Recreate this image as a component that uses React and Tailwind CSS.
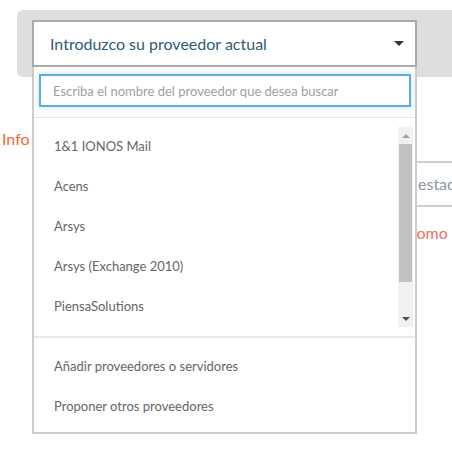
import { useState } from "react"

const providers = [
  "1&1 IONOS Mail",
  "Acens",
  "Arsys",
  "Arsys (Exchange 2010)",
  "PiensaSolutions",
  "Strato",
]

function ProviderDropdown() {
  const [query, setQuery] = useState("")

  return (
    <div className="absolute left-[32px] top-[67px] w-[385px] h-[367px] bg-white border-2 border-t-0 border-[#cccccc] flex flex-col">
      {/* Search */}
      <div className="pl-[5px] pr-[4px] pt-[7px] pb-[10px] border-b border-[#e5e5e5]">
        <input
          value={query}
          onChange={(e) => setQuery(e.target.value)}
          placeholder="Escriba el nombre del proveedor que desea buscar"
          className="w-full h-[33px] border-2 border-[#5dade2] px-[12px] text-[13px] text-[#555] placeholder:text-[#a0a0a0] outline-none shadow-[0_0_6px_rgba(93,173,226,0.35)]"
        />
      </div>

      {/* List */}
      <div className="pt-[9px] pb-[9px] border-b-2 border-[#e8e8e8]">
        <div className="h-[200px] flex overflow-hidden">
          <ul className="flex-1">
            {providers.map((p) => (
              <li key={p} className="h-[40px] flex items-center pl-[20px] text-[13px] text-[#666]">
                {p}
              </li>
            ))}
          </ul>
          <div className="w-[15px] mr-[2px] bg-[#f1f1f1] flex flex-col items-center">
            <div className="h-[17px] flex items-center justify-center">
              <div className="w-0 h-0 border-l-[4px] border-r-[4px] border-b-[4px] border-l-transparent border-r-transparent border-b-[#a3a3a3]" />
            </div>
            <div className="w-[13px] h-[138px] bg-[#c1c1c1]" />
            <div className="flex-1" />
            <div className="h-[17px] flex items-center justify-center">
              <div className="w-0 h-0 border-l-[4px] border-r-[4px] border-t-[4px] border-l-transparent border-r-transparent border-t-[#505050]" />
            </div>
          </div>
        </div>
      </div>

      {/* Footer actions */}
      <div className="pt-[9px]">
        <div className="h-[40px] flex items-center pl-[20px] text-[13px] text-[#666]">Añadir proveedores o servidores</div>
        <div className="h-[40px] flex items-center pl-[20px] text-[13px] text-[#666]">Proponer otros proveedores</div>
      </div>
    </div>
  )
}

export default function App() {
  return (
    <div className="relative w-[452px] h-[453px] bg-white overflow-hidden font-['Lato',sans-serif]">
      {/* Selector bar */}
      <div className="ml-[17px] mt-[10px] h-[67px] bg-[#dedede] rounded-l-[6px] pl-[15px] pt-[10px]">
        <div className="w-[385px] h-[47px] bg-white border-2 border-[#aaaaaa] flex items-center pl-[16px] pr-[11px]">
          <span className="flex-1 text-[16px] text-[#2f5b78]">Introduzco su proveedor actual</span>
          <div className="w-0 h-0 border-l-[5px] border-r-[5px] border-t-[5px] border-l-transparent border-r-transparent border-t-[#333]" />
        </div>
      </div>

      {/* Page content behind dropdown */}
      <div className="flex">
        <div className="pl-[2px] pt-[50px] text-[16px] text-[#f26a2b]">Info</div>
        <div className="ml-auto w-[36px] mt-[84px] overflow-hidden">
          <div className="h-[46px] border-y-2 border-[#cccccc] flex items-center text-[16px] text-[#8a97a5] whitespace-nowrap">
            <span className="pl-[2px]">estado</span>
          </div>
          <div className="pt-[14px] text-[16px] text-[#ec7063] whitespace-nowrap">
            <span className="-ml-[7px]">como</span>
          </div>
        </div>
      </div>

      <ProviderDropdown />
    </div>
  )
}
